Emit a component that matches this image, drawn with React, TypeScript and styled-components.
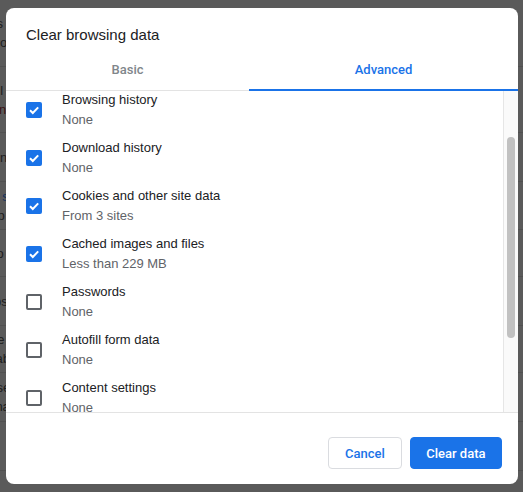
import React from "react";
import styled, { createGlobalStyle } from "styled-components";

const Global = createGlobalStyle`
  html, body { margin: 0; padding: 0; }
  body {
    width: 523px;
    height: 492px;
    overflow: hidden;
    background: #5a5a5a;
    font-family: "Liberation Sans", Arial, sans-serif;
  }
`;

const Screen = styled.div`
  position: relative;
  width: 523px;
  height: 492px;
  overflow: hidden;
  background: #5a5a5a;
`;

const Backdrop = styled.div`
  display: flex;
  flex-direction: column;
`;

const BackRow = styled.div<{ $h: number }>`
  height: ${(p) => p.$h}px;
  border-bottom: 1px solid #505050;
  display: flex;
  flex-direction: column;
  justify-content: center;
  gap: 4px;
  box-sizing: border-box;
`;

const BackText = styled.span<{ $shift: number; $color?: string }>`
  display: block;
  white-space: nowrap;
  font-size: 13px;
  line-height: 15px;
  color: ${(p) => p.$color || "#1d1d1d"};
  margin-left: ${(p) => -p.$shift}px;
`;

const Dialog = styled.div`
  position: absolute;
  left: 6px;
  top: 8px;
  width: 512px;
  height: 476px;
  background: #fff;
  border-radius: 8px;
  display: flex;
  flex-direction: column;
  overflow: hidden;
`;

const Title = styled.h1`
  margin: 0;
  padding: 17px 20px 0;
  height: 37px;
  box-sizing: border-box;
  font-size: 15px;
  line-height: 20px;
  font-weight: 400;
  color: #202124;
`;

const TabBar = styled.div`
  display: grid;
  grid-template-columns: 243px 1fr;
  border-bottom: 1px solid #e3e3e3;
`;

const Tab = styled.div<{ $active?: boolean }>`
  position: relative;
  height: 45px;
  box-sizing: border-box;
  padding-top: 17px;
  text-align: center;
  font-family: Roboto, "Liberation Sans", sans-serif;
  font-size: 13px;
  line-height: 16px;
  font-weight: 500;
  color: ${(p) => (p.$active ? "#1a73e8" : "#80868b")};
  &::after {
    content: "";
    display: ${(p) => (p.$active ? "block" : "none")};
    position: absolute;
    left: 0;
    right: 0;
    bottom: -1px;
    height: 2px;
    background: #1a73e8;
  }
`;

const Body = styled.div`
  height: 321px;
  display: flex;
  overflow: hidden;
`;

const ListViewport = styled.div`
  flex: 1;
  overflow: hidden;
`;

const List = styled.div`
  margin-top: -5px;
  display: flex;
  flex-direction: column;
`;

const Row = styled.div`
  height: 48px;
  display: flex;
  align-items: center;
  padding-left: 20px;
  gap: 20px;
  flex-shrink: 0;
`;

const Box = styled.div<{ $checked: boolean }>`
  width: 16px;
  height: 16px;
  box-sizing: border-box;
  border-radius: 2px;
  flex-shrink: 0;
  background: ${(p) => (p.$checked ? "#1a73e8" : "#fff")};
  border: ${(p) => (p.$checked ? "none" : "2px solid #5f6368")};
  display: flex;
  align-items: center;
  justify-content: center;
`;

const Labels = styled.div`
  display: flex;
  flex-direction: column;
`;

const Primary = styled.div`
  font-size: 13px;
  line-height: 20px;
  color: #202124;
`;

const Secondary = styled.div`
  font-size: 13px;
  line-height: 20px;
  color: #5f6368;
`;

const Track = styled.div`
  width: 15px;
  box-sizing: border-box;
  border-left: 1px solid #e6e6e6;
  background: #fafafa;
  padding: 46px 3px 0 3px;
`;

const Thumb = styled.div`
  width: 8px;
  height: 201px;
  border-radius: 4px;
  background: #c1c1c1;
`;

const Footer = styled.div`
  border-top: 1px solid #e3e3e3;
  padding: 24px 16px 15px;
  display: flex;
  justify-content: flex-end;
  gap: 8px;
  flex: 1;
`;

const Button = styled.button<{ $primary?: boolean }>`
  height: 32px;
  padding: 0 ${(p) => (p.$primary ? "15.5px" : "16px")};
  box-sizing: border-box;
  border-radius: 4px;
  font-family: Roboto, "Liberation Sans", sans-serif;
  font-size: 13px;
  font-weight: 500;
  cursor: pointer;
  border: 1px solid ${(p) => (p.$primary ? "#1a73e8" : "#dadce0")};
  background: ${(p) => (p.$primary ? "#1a73e8" : "#fff")};
  color: ${(p) => (p.$primary ? "#fff" : "#1a73e8")};
`;

const Check = () => (
  <svg width="12" height="12" viewBox="0 0 12 12">
    <path d="M2 6.2 L4.8 9 L10.2 3.4" fill="none" stroke="#fff" strokeWidth="2" />
  </svg>
);

const items = [
  { title: "Browsing history", sub: "None", checked: true },
  { title: "Download history", sub: "None", checked: true },
  { title: "Cookies and other site data", sub: "From 3 sites", checked: true },
  { title: "Cached images and files", sub: "Less than 229 MB", checked: true },
  { title: "Passwords", sub: "None", checked: false },
  { title: "Autofill form data", sub: "None", checked: false },
  { title: "Content settings", sub: "None", checked: false },
  { title: "Hosted app data", sub: "None", checked: false },
];

const backRows: { h: number; lines: { t: string; s: number; c?: string }[] }[] = [
  { h: 67, lines: [{ t: "Settings", s: 44 }, { t: "Go", s: 10 }] },
  { h: 66, lines: [{ t: "Autofill", s: 36 }, { t: "Turn on", s: 38, c: "#3a1414" }] },
  { h: 49, lines: [{ t: "Location", s: 42 }] },
  { h: 48, lines: [{ t: "Auto s", s: 28, c: "#12305e" }, { t: "Help", s: 22 }] },
  { h: 47, lines: [{ t: "Info", s: 18 }] },
  { h: 49, lines: [{ t: "Apps", s: 22 }] },
  { h: 47, lines: [{ t: "Site", s: 18 }, { t: "Tab", s: 11 }] },
  { h: 49, lines: [{ t: "Reset", s: 20 }, { t: "Cna", s: 14 }] },
  { h: 49, lines: [{ t: "", s: 0 }] },
];

export default function App() {
  return (
    <Screen>
      <Global />
      <Backdrop>
        {backRows.map((r, i) => (
          <BackRow key={i} $h={r.h}>
            {r.lines.map((l, j) => (
              <BackText key={j} $shift={l.s} $color={l.c}>
                {l.t}
              </BackText>
            ))}
          </BackRow>
        ))}
      </Backdrop>
      <Dialog>
        <Title>Clear browsing data</Title>
        <TabBar>
          <Tab>Basic</Tab>
          <Tab $active>Advanced</Tab>
        </TabBar>
        <Body>
          <ListViewport>
            <List>
              {items.map((it) => (
                <Row key={it.title}>
                  <Box $checked={it.checked}>{it.checked && <Check />}</Box>
                  <Labels>
                    <Primary>{it.title}</Primary>
                    <Secondary>{it.sub}</Secondary>
                  </Labels>
                </Row>
              ))}
            </List>
          </ListViewport>
          <Track>
            <Thumb />
          </Track>
        </Body>
        <Footer>
          <Button>Cancel</Button>
          <Button $primary>Clear data</Button>
        </Footer>
      </Dialog>
    </Screen>
  );
}
